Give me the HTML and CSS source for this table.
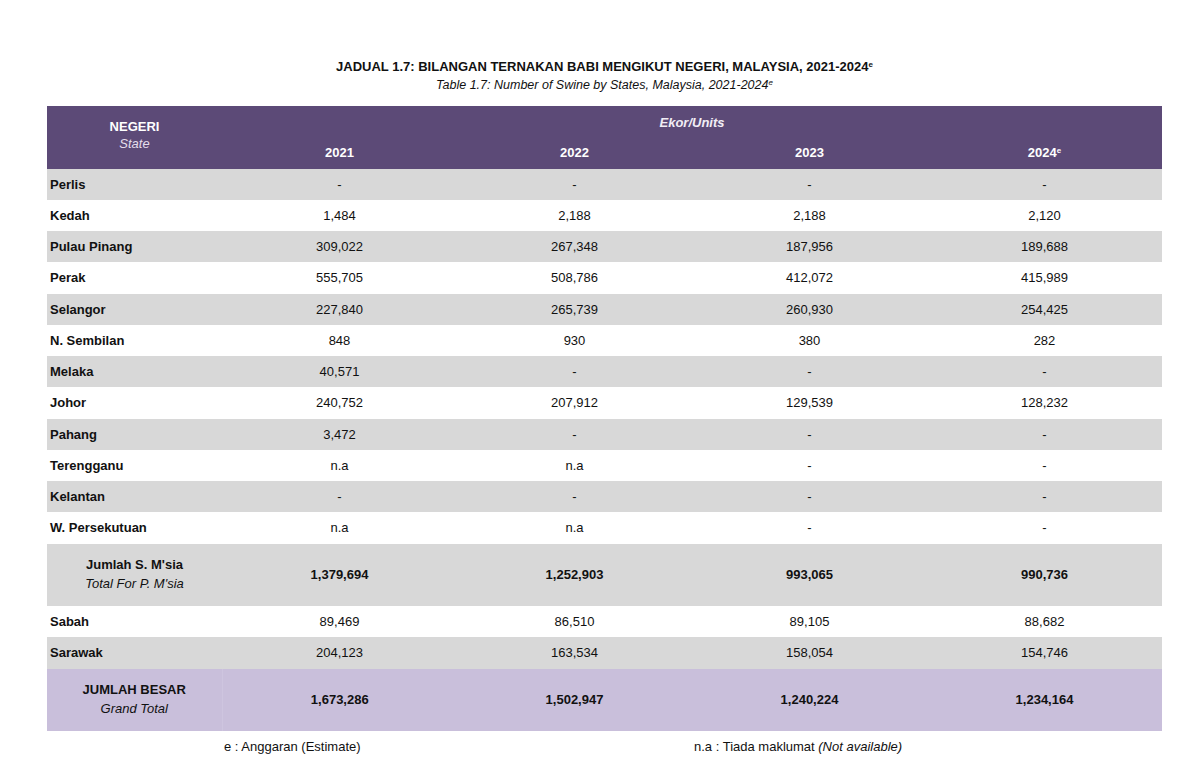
FILE: index.html
```html
<!DOCTYPE html>
<html lang="ms">
  <head>
    <meta charset="UTF-8" />
    <meta name="viewport" content="width=device-width, initial-scale=1.0" />
    <link rel="stylesheet" href="styles.css">
    <title>Jadual 1.7</title>
  </head>
  <body class="page">
    <div class="report">
      <h1 class="report__title">JADUAL 1.7: BILANGAN TERNAKAN BABI MENGIKUT NEGERI, MALAYSIA, 2021-2024<sup>e</sup></h1>
      <p class="report__subtitle">Table 1.7: Number of Swine by States, Malaysia, 2021-2024<sup>e</sup></p>

      <table class="stats">
        <thead>
          <tr class="stats__head-top">
            <th class="stats__state-head" rowspan="2">
              <span class="stats__ms">NEGERI</span>
              <span class="stats__en">State</span>
            </th>
            <th class="stats__units" colspan="4">Ekor/Units</th>
          </tr>
          <tr class="stats__head-years">
            <th>2021</th>
            <th>2022</th>
            <th>2023</th>
            <th>2024<sup>e</sup></th>
          </tr>
        </thead>
        <tbody>
          <tr class="stats__row stats__row--grey"><td class="stats__state">Perlis</td><td>-</td><td>-</td><td>-</td><td>-</td></tr>
          <tr class="stats__row"><td class="stats__state">Kedah</td><td>1,484</td><td>2,188</td><td>2,188</td><td>2,120</td></tr>
          <tr class="stats__row stats__row--grey"><td class="stats__state">Pulau Pinang</td><td>309,022</td><td>267,348</td><td>187,956</td><td>189,688</td></tr>
          <tr class="stats__row"><td class="stats__state">Perak</td><td>555,705</td><td>508,786</td><td>412,072</td><td>415,989</td></tr>
          <tr class="stats__row stats__row--grey"><td class="stats__state">Selangor</td><td>227,840</td><td>265,739</td><td>260,930</td><td>254,425</td></tr>
          <tr class="stats__row"><td class="stats__state">N. Sembilan</td><td>848</td><td>930</td><td>380</td><td>282</td></tr>
          <tr class="stats__row stats__row--grey"><td class="stats__state">Melaka</td><td>40,571</td><td>-</td><td>-</td><td>-</td></tr>
          <tr class="stats__row"><td class="stats__state">Johor</td><td>240,752</td><td>207,912</td><td>129,539</td><td>128,232</td></tr>
          <tr class="stats__row stats__row--grey"><td class="stats__state">Pahang</td><td>3,472</td><td>-</td><td>-</td><td>-</td></tr>
          <tr class="stats__row"><td class="stats__state">Terengganu</td><td>n.a</td><td>n.a</td><td>-</td><td>-</td></tr>
          <tr class="stats__row stats__row--grey"><td class="stats__state">Kelantan</td><td>-</td><td>-</td><td>-</td><td>-</td></tr>
          <tr class="stats__row"><td class="stats__state">W. Persekutuan</td><td>n.a</td><td>n.a</td><td>-</td><td>-</td></tr>
          <tr class="stats__total stats__row--grey">
            <td class="stats__total-label">
              <span class="stats__ms">Jumlah S. M'sia</span>
              <span class="stats__en">Total For P. M'sia</span>
            </td>
            <td>1,379,694</td><td>1,252,903</td><td>993,065</td><td>990,736</td>
          </tr>
          <tr class="stats__row"><td class="stats__state">Sabah</td><td>89,469</td><td>86,510</td><td>89,105</td><td>88,682</td></tr>
          <tr class="stats__row stats__row--grey"><td class="stats__state">Sarawak</td><td>204,123</td><td>163,534</td><td>158,054</td><td>154,746</td></tr>
          <tr class="stats__total stats__total--grand">
            <td class="stats__total-label">
              <span class="stats__ms">JUMLAH BESAR</span>
              <span class="stats__en">Grand Total</span>
            </td>
            <td>1,673,286</td><td>1,502,947</td><td>1,240,224</td><td>1,234,164</td>
          </tr>
        </tbody>
      </table>

      <div class="notes">
        <p class="notes__item">e : Anggaran (Estimate)</p>
        <p class="notes__item">n.a : Tiada maklumat <i>(Not available)</i></p>
      </div>
    </div>
  </body>
</html>
```

FILE: styles.css
```css
.page {
  margin: 0;
  background: #ffffff;
  color: #111111;
  font-family: "Liberation Sans", Arial, sans-serif;
}
.report {
  width: 1115px;
  margin-left: 47px;
  padding-top: 58px;
}
.report__title {
  margin: 0;
  text-align: center;
  font-size: 13px;
  font-weight: bold;
  line-height: 18px;
}
.report__subtitle {
  margin: 1px 0 0;
  text-align: center;
  font-size: 12.5px;
  font-style: italic;
  line-height: 17px;
}
sup {
  font-size: 8px;
  vertical-align: 4px;
  line-height: 0;
}
.stats {
  width: 100%;
  margin-top: 12px;
  border-collapse: collapse;
  table-layout: fixed;
  font-size: 13px;
}
.stats th,
.stats td {
  padding: 0;
  text-align: center;
}
.stats thead {
  background: #5c4a77;
  color: #ffffff;
}
.stats__state-head {
  width: 175px;
  vertical-align: top;
  padding-top: 12px !important;
}
.stats__ms {
  display: block;
  font-weight: bold;
  line-height: 17px;
}
.stats__en {
  display: block;
  font-style: italic;
  font-weight: normal;
  line-height: 18px;
}
.stats__state-head .stats__en {
  color: #e4deec;
}
.stats__head-top {
  height: 31px;
}
.stats__units {
  font-style: italic;
  font-weight: bold;
  vertical-align: top;
  padding-top: 9px !important;
  color: #f1edf5;
}
.stats__head-years {
  height: 31.5px;
}
.stats__head-years th {
  font-weight: bold;
  vertical-align: top;
  padding-top: 8px;
}
.stats__row {
  height: 31.25px;
}
.stats__row--grey {
  background: #d8d8d8;
}
.stats__state {
  text-align: left !important;
  padding-left: 3px !important;
  font-weight: bold;
}
.stats__total {
  height: 62.5px;
  font-weight: bold;
}
.stats__total--grand {
  background: #c9bfdb;
}
.stats__total--grand .stats__total-label {
  border-right: 1px solid #cec5df;
}
.stats__total-label .stats__ms {
  line-height: 18px;
}
.stats__total-label .stats__en {
  line-height: 20px;
}
.notes {
  display: grid;
  grid-template-columns: 175px 470px 470px;
  margin-top: 7px;
  font-size: 13px;
}
.notes__item {
  margin: 0;
  padding-left: 2px;
  line-height: 18px;
}
.notes__item:first-child {
  grid-column: 2;
}
```
